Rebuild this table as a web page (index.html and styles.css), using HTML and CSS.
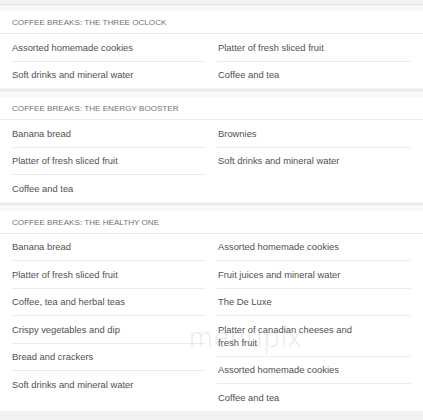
FILE: index.html
```html
<!DOCTYPE html>
<html>
<head>
<meta charset="utf-8">
<link rel="stylesheet" href="styles.css">
</head>
<body>
<div class="page">
  <section class="section">
    <div class="section-title">COFFEE BREAKS: THE THREE OCLOCK</div>
    <div class="cols">
      <ul class="col">
        <li>Assorted homemade cookies</li>
        <li>Soft drinks and mineral water</li>
      </ul>
      <ul class="col">
        <li>Platter of fresh sliced fruit</li>
        <li>Coffee and tea</li>
      </ul>
    </div>
  </section>
  <section class="section">
    <div class="section-title">COFFEE BREAKS: THE ENERGY BOOSTER</div>
    <div class="cols">
      <ul class="col">
        <li>Banana bread</li>
        <li>Platter of fresh sliced fruit</li>
        <li>Coffee and tea</li>
      </ul>
      <ul class="col">
        <li>Brownies</li>
        <li>Soft drinks and mineral water</li>
      </ul>
    </div>
  </section>
  <section class="section">
    <div class="section-title">COFFEE BREAKS: THE HEALTHY ONE</div>
    <div class="cols">
      <ul class="col">
        <li>Banana bread</li>
        <li>Platter of fresh sliced fruit</li>
        <li>Coffee, tea and herbal teas</li>
        <li>Crispy vegetables and dip</li>
        <li>Bread and crackers</li>
        <li>Soft drinks and mineral water</li>
      </ul>
      <ul class="col">
        <li>Assorted homemade cookies</li>
        <li>Fruit juices and mineral water</li>
        <li>The De Luxe</li>
        <li>Platter of canadian cheeses and<br>fresh fruit</li>
        <li>Assorted homemade cookies</li>
        <li>Coffee and tea</li>
      </ul>
    </div>
  </section>
  <div class="watermark">menupix</div>
</div>
</body>
</html>
```

FILE: styles.css
```css
html, body {
  margin: 0;
  padding: 0;
}
body {
  background: #f2f2f2;
  font-family: "Liberation Sans", Arial, sans-serif;
  color: #505050;
}
.page {
  position: relative;
  padding-top: 4px;
}
.section {
  background: #fff;
  border-top: 1px solid #e4e4e4;
  margin-bottom: 2px;
}
.section-title {
  border-top: 6px solid #f8f8f8;
  height: 22px;
  line-height: 23px;
  padding-left: 12px;
  font-size: 8.1px;
  color: #727272;
  border-bottom: 1px solid #ebebeb;
}
.cols {
  display: grid;
  grid-template-columns: 1fr 1fr;
  column-gap: 11px;
  padding: 0 12px;
}
.col {
  list-style: none;
  margin: 0;
  padding: 0;
}
.col li {
  padding: 6.5px 0 7px;
  line-height: 13px;
  font-size: 9.4px;
  border-bottom: 1px solid #ececec;
}
.col li:last-child {
  border-bottom: none;
}
.col + .col li {
  padding-left: 1px;
}
.watermark {
  position: absolute;
  left: 189px;
  top: 318px;
  font-family: "Open Sans", sans-serif;
  font-size: 27px;
  font-weight: 300;
  letter-spacing: 1px;
  color: rgba(150, 150, 150, 0.22);
  pointer-events: none;
}
```
